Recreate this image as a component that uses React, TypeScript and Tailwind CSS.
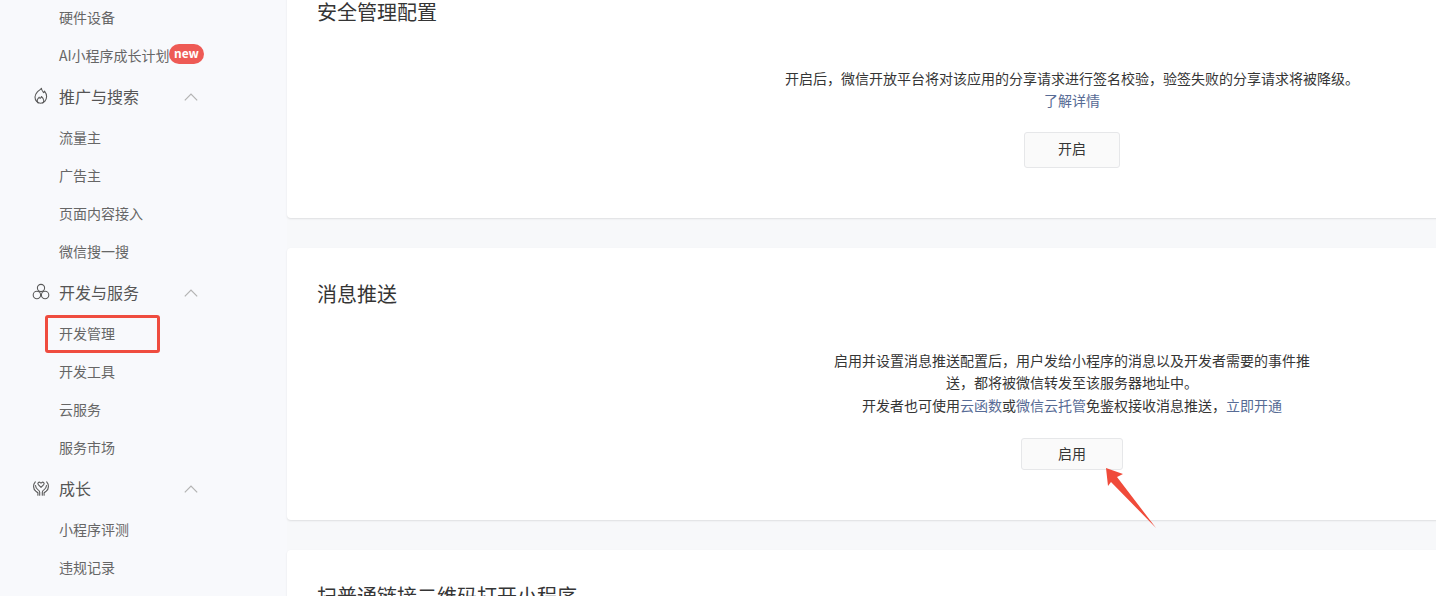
const FlameIcon = () => (
  <svg width="18" height="18" viewBox="0 0 18 18" fill="none" stroke="#5a5a5a" strokeWidth="1.1" strokeLinejoin="round" className="shrink-0">
    <path d="M9.400 1.200c.2 2.200 1.300 3.300 2.300 4.500.5-.5.700-1 .8-1.600 1.300 1.600 2.100 3.500 2.100 5.400 0 3.800-2.800 6.800-6 6.800S3 13.400 3 10.100c0-2 1-3.600 2.200-5C7 3.200 9 2.400 9.400 1.200Z" />
    <path d="M6.500 16.200c-1.200-.9-1.700-2.200-1.100-3.600.4-.9 1.100-1.500 1.700-2.400.3.800.7 1.100 1.200 1.100.6-.4 1-1 1.100-1.800 1.300 1.200 2.500 2.600 2.400 4.200-.1 1-.6 1.900-1.400 2.500" />
  </svg>
);

const CirclesIcon = () => (
  <svg width="18" height="18" viewBox="0 0 18 18" fill="none" stroke="#5a5a5a" strokeWidth="1.1" className="shrink-0">
    <circle cx="9" cy="5" r="3.600" />
    <circle cx="4.900" cy="12" r="3.700" />
    <circle cx="13.100" cy="12" r="3.700" />
  </svg>
);

const HandsHeartIcon = () => (
  <svg width="18" height="18" viewBox="0 0 18 18" fill="none" stroke="#5a5a5a" strokeWidth="1.1" strokeLinecap="round" strokeLinejoin="round" className="shrink-0">
    <path d="M9 8.400 6.300 5.700c-1.200-1.300.6-3.300 2-2.100l.7.600.7-.6c1.400-1.200 3.200.8 2 2.100L9 8.400Z" />
    <path d="M3.300 2.900C.900 5.500.900 9.800 3.800 12.200l2.100 1.500v2.500" />
    <path d="M14.700 2.900c2.400 2.600 2.400 6.900-.5 9.300l-2.100 1.500v2.500" />
    <path d="M3.500 6.500c.2 2.300 1.300 3.300 2.400 4.100.9.600 1.800 1.500 1.800 2.700v2.900" />
    <path d="M14.500 6.500c-.2 2.300-1.300 3.300-2.400 4.100-.9.600-1.800 1.500-1.800 2.700v2.900" />
  </svg>
);

const Chevron = () => (
  <svg width="14" height="8" viewBox="0 0 14 8" fill="none" stroke="#b3b3b3" strokeWidth="1.2" className="ml-auto mr-[2px] mt-[2px] shrink-0">
    <path d="M.8 7.400 7 1l6.200 6.400" />
  </svg>
);

function SubItem({ label, badge, marked }: { label: string; badge?: boolean; marked?: boolean }) {
  return (
    <div className="relative flex h-[38px] items-center pl-[59px] text-sm text-[#666666]">
      {label}
      {badge && (
        <span className="absolute left-[169px] top-[8px] flex h-5 w-[35px] items-center justify-center rounded-full bg-[#ee5a55] pb-[2px] text-[12px] font-bold leading-none text-white">
          new
        </span>
      )}
      {marked && (
        <span className="absolute -bottom-px left-[45px] top-px w-[115px] rounded-[3px] border-[3px] border-[#ef4c3f]" />
      )}
    </div>
  );
}

function Section({ icon, label }: { icon: React.ReactNode; label: string }) {
  return (
    <div className="flex h-[44px] items-center gap-[9px] pl-8 pr-[87px] text-base text-[#555555]">
      {icon}
      <span>{label}</span>
      <Chevron />
    </div>
  );
}

function Button({ label, className }: { label: string; className: string }) {
  return (
    <button
      type="button"
      className={`flex items-center justify-center rounded-[3px] border border-[#e6e7e9] bg-[#fafafa] pb-[3px] text-sm text-[#353535] ${className}`}
    >
      {label}
    </button>
  );
}

function Card({ title, height, children }: { title: string; height: string; children?: React.ReactNode }) {
  return (
    <section className={`shrink-0 rounded-[4px] bg-white px-[30px] pt-8 shadow-[0_1px_2px_rgba(0,0,0,0.1)] ${height}`}>
      <h2 className="text-[20px] leading-7 text-[#353535]">{title}</h2>
      {children}
    </section>
  );
}

export default function App() {
  return (
    <div
      className="relative flex h-[596px] w-[1436px] overflow-hidden bg-[#f7f8fa]"
      style={{ fontFamily: '"Noto Sans CJK SC", "Liberation Sans", sans-serif' }}
    >
      <aside className="-mt-[2px] w-[287px] shrink-0 bg-[#f8f9fc]">
        <SubItem label="硬件设备" />
        <SubItem label="AI小程序成长计划" badge />
        <Section icon={<FlameIcon />} label="推广与搜索" />
        <SubItem label="流量主" />
        <SubItem label="广告主" />
        <SubItem label="页面内容接入" />
        <SubItem label="微信搜一搜" />
        <Section icon={<CirclesIcon />} label="开发与服务" />
        <SubItem label="开发管理" marked />
        <SubItem label="开发工具" />
        <SubItem label="云服务" />
        <SubItem label="服务市场" />
        <Section icon={<HandsHeartIcon />} label="成长" />
        <SubItem label="小程序评测" />
        <SubItem label="违规记录" />
      </aside>

      <main className="-mt-[34px] flex w-[1570px] shrink-0 flex-col gap-[30px]">
        <Card title="安全管理配置" height="h-[252px]">
          <div className="mt-[41px] flex flex-col items-center text-center text-sm leading-[22.4px] text-[#353535]">
            <p>开启后，微信开放平台将对该应用的分享请求进行签名校验，验签失败的分享请求将被降级。</p>
            <a className="text-[#576b95]">了解详情</a>
            <Button label="开启" className="mt-5 h-9 w-24" />
          </div>
        </Card>

        <Card title="消息推送" height="h-[272px]">
          <div className="mt-[41px] flex flex-col items-center text-center text-sm leading-[22.4px] text-[#353535]">
            <p className="w-[480px]">启用并设置消息推送配置后，用户发给小程序的消息以及开发者需要的事件推送，都将被微信转发至该服务器地址中。</p>
            <p>
              开发者也可使用<a className="text-[#576b95]">云函数</a>或<a className="text-[#576b95]">微信云托管</a>免鉴权接收消息推送，<a className="text-[#576b95]">立即开通</a>
            </p>
            <Button label="启用" className="mt-[22px] h-8 w-[102px]" />
          </div>
        </Card>

        <Card title="扫普通链接二维码打开小程序" height="h-[200px]" />
      </main>

      {/* red annotation arrow drawn over the screenshot */}
      <svg width="60" height="70" viewBox="0 0 60 70" className="absolute left-[1100px] top-[462px]">
        <path d="M6 6 23 12 17 15 56 66 11 20 8 24Z" fill="#f04b3a" />
      </svg>
    </div>
  );
}
